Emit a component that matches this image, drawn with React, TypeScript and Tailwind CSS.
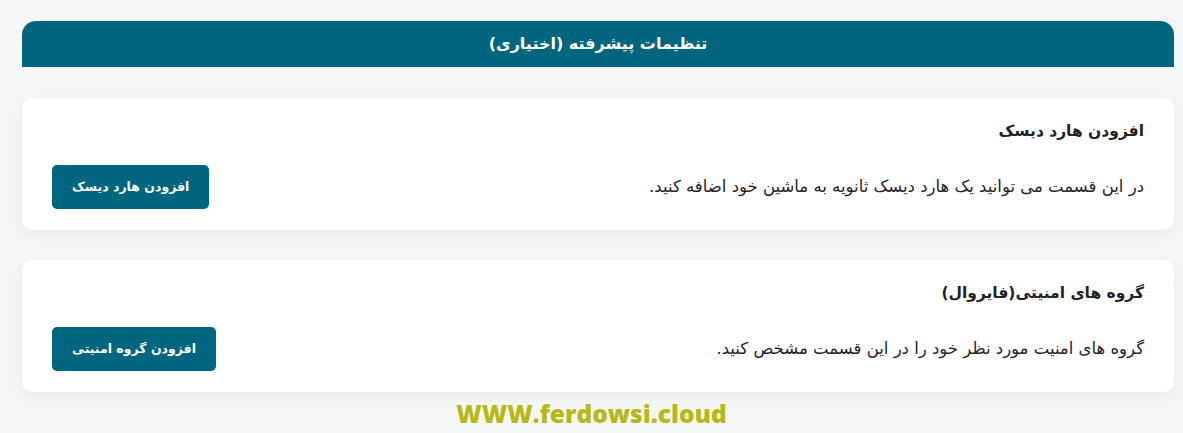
import React from "react"

const fa = { fontFamily: '"DejaVu Sans", sans-serif' }

function OptionCard({ title, text, action }: { title: string; text: string; action: string }) {
  return (
    <section className="rounded-[10px] bg-white px-[30px] pt-[21px] pb-[21px] shadow-[0_4px_14px_rgba(0,0,0,0.05)]">
      <h3 className="text-[15.5px] font-semibold leading-[24px] text-[#1f2328]">{title}</h3>
      <div className="mt-[22px] flex h-[44px] items-center justify-between">
        <p className="text-[16.5px] leading-[24px] text-[#1f2328]">{text}</p>
        <button className="h-[44px] rounded-[5px] bg-[#00657f] px-[20px] text-[12.5px] font-semibold text-white">
          {action}
        </button>
      </div>
    </section>
  )
}

export default function App() {
  return (
    <div dir="rtl" style={fa} className="h-[433px] overflow-hidden bg-[#f5f6f8] pt-[21px] pl-[22px] pr-[9px]">
      <header className="flex h-[46px] items-center justify-center rounded-t-[14px] bg-[#00657f]">
        <h2 className="text-[16px] font-bold text-white">تنظیمات پیشرفته (اختیاری)</h2>
      </header>

      <div className="mt-[31px] flex flex-col gap-[30px]">
        <OptionCard
          title="افزودن هارد دیسک"
          text="در این قسمت می توانید یک هارد دیسک ثانویه به ماشین خود اضافه کنید."
          action="افزودن هارد دیسک"
        />
        <OptionCard
          title="گروه های امنیتی(فایروال)"
          text="گروه های امنیت مورد نظر خود را در این قسمت مشخص کنید."
          action="افزودن گروه امنیتی"
        />
      </div>

      {/* site watermark */}
      <div
        dir="ltr"
        className="mt-[7px] pr-[13px] text-center text-[24.5px] font-extrabold leading-[30px] text-[#b6b912]"
        style={{ fontFamily: '"Open Sans", sans-serif' }}
      >
        WWW.ferdowsi.cloud
      </div>
    </div>
  )
}
